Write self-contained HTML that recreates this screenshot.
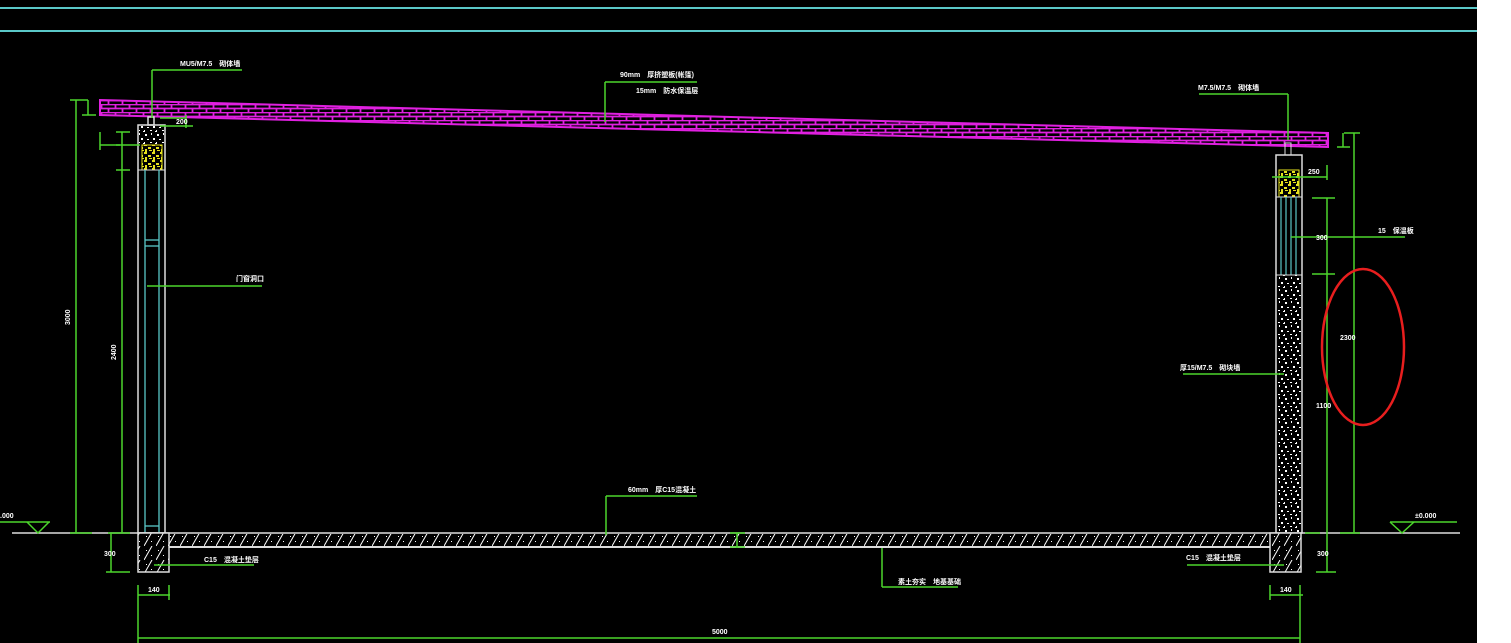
<!DOCTYPE html>
<html><head><meta charset="utf-8"><style>
html,body{margin:0;padding:0;background:#fff;}
svg{display:block;}
text{font-family:"Liberation Sans","Noto Sans CJK SC",sans-serif;fill:#fff;font-size:7px;font-weight:bold;}
</style></head><body>
<svg width="1511" height="643" viewBox="0 0 1511 643" xmlns="http://www.w3.org/2000/svg">
<defs>
<pattern id="hex" width="14" height="8" patternUnits="userSpaceOnUse">
<rect width="14" height="8" fill="#000"/>
<path d="M0 0.5H14M0 4.5H14M3.5 0.5V4.5M10.5 4.5V8" stroke="#e020e0" stroke-width="1.8" fill="none"/>
</pattern>
<pattern id="speck" width="12" height="12" patternUnits="userSpaceOnUse">
<rect width="12" height="12" fill="#000"/>
<rect x="1" y="2" width="2" height="2" fill="#fff"/><rect x="7" y="1" width="1" height="2" fill="#fff"/>
<rect x="9" y="6" width="2" height="2" fill="#fff"/><rect x="3" y="7" width="2" height="1" fill="#fff"/>
<rect x="6" y="10" width="2" height="1" fill="#fff"/><rect x="11" y="11" width="1" height="1" fill="#fff"/>
<rect x="0" y="10" width="1" height="2" fill="#fff"/>
</pattern>
<pattern id="ysp" width="8" height="8" patternUnits="userSpaceOnUse">
<rect width="8" height="8" fill="#000"/>
<rect x="0" y="0" width="3" height="2" fill="#e6e21e"/><rect x="4" y="3" width="3" height="2" fill="#e6e21e"/>
<rect x="1" y="5" width="2" height="3" fill="#e6e21e"/><rect x="5" y="6" width="3" height="1" fill="#e6e21e"/>
</pattern>
<pattern id="hatch" width="12" height="14" patternUnits="userSpaceOnUse">
<rect width="12" height="14" fill="#000"/>
<path d="M0 14L8 0" stroke="#fff" stroke-width="1"/>
<rect x="7" y="9" width="1" height="1" fill="#fff"/><rect x="2" y="4" width="1" height="1" fill="#fff"/>
</pattern>
</defs>
<rect width="1477" height="643" fill="#000"/>
<line x1="0" y1="8" x2="1477" y2="8" stroke="#5ac8c8" stroke-width="2"/>
<line x1="0" y1="31" x2="1477" y2="31" stroke="#5ac8c8" stroke-width="2"/>

<polygon points="100,100 1328,133 1328,147 100,115" fill="url(#hex)" stroke="#e020e0" stroke-width="2"/>

<g stroke="#ddd" stroke-width="1.5" fill="none">
<rect x="138" y="125" width="27" height="408" />
<rect x="148" y="117" width="6" height="8"/>
</g>
<rect x="139" y="126" width="25" height="18" fill="url(#speck)"/>
<rect x="142" y="145" width="20" height="25" fill="url(#ysp)" stroke="#e6e21e"/>
<line x1="138" y1="170" x2="165" y2="170" stroke="#ddd"/>
<g stroke="#5ac8c8" stroke-width="1.3">
<line x1="145" y1="170" x2="145" y2="533"/><line x1="159" y1="170" x2="159" y2="533"/>
<line x1="145" y1="240" x2="159" y2="240"/><line x1="145" y1="246" x2="159" y2="246"/>
<line x1="145" y1="526" x2="159" y2="526"/>
</g>

<rect x="1276" y="155" width="26" height="378" fill="none" stroke="#ddd" stroke-width="1.5"/>
<rect x="1285" y="143" width="6" height="12" fill="none" stroke="#ddd"/>
<rect x="1279" y="170" width="20" height="27" fill="url(#ysp)" stroke="#e6e21e"/>
<line x1="1276" y1="197" x2="1302" y2="197" stroke="#ddd"/>
<g stroke="#5ac8c8" stroke-width="1.2">
<line x1="1281" y1="197" x2="1281" y2="275"/><line x1="1286" y1="197" x2="1286" y2="275"/>
<line x1="1291" y1="197" x2="1291" y2="275"/><line x1="1296" y1="197" x2="1296" y2="275"/>
</g>
<rect x="1277" y="275" width="24" height="258" fill="url(#speck)"/>
<line x1="1276" y1="275" x2="1302" y2="275" stroke="#ddd"/>

<rect x="165" y="534" width="1105" height="13" fill="url(#hatch)"/>
<line x1="12" y1="533" x2="1460" y2="533" stroke="#ddd" stroke-width="1.5"/>
<line x1="169" y1="547" x2="1270" y2="547" stroke="#ddd" stroke-width="2"/>
<rect x="138" y="533" width="31" height="39" fill="url(#hatch)" stroke="#ddd" stroke-width="1.5"/>
<rect x="1270" y="533" width="31" height="39" fill="url(#hatch)" stroke="#ddd" stroke-width="1.5"/>

<g stroke="#4cd62c" stroke-width="1.5" fill="none">
<line x1="76" y1="100" x2="76" y2="533"/><line x1="70" y1="100" x2="88" y2="100"/><line x1="70" y1="533" x2="92" y2="533"/>
<line x1="88" y1="100" x2="88" y2="115"/><line x1="82" y1="115" x2="96" y2="115"/>
<line x1="122" y1="132" x2="122" y2="533"/><line x1="116" y1="132" x2="130" y2="132"/><line x1="116" y1="145" x2="140" y2="145"/><line x1="116" y1="170" x2="130" y2="170"/><line x1="108" y1="533" x2="130" y2="533"/>
<line x1="100" y1="145" x2="120" y2="145"/><line x1="100" y1="132" x2="100" y2="150"/>
<line x1="152" y1="70" x2="242" y2="70"/><line x1="152" y1="70" x2="152" y2="118"/>
<line x1="160" y1="118" x2="186" y2="118"/><line x1="186" y1="115" x2="186" y2="128"/><line x1="160" y1="126" x2="193" y2="126"/>
<line x1="147" y1="286" x2="262" y2="286"/>
<line x1="111" y1="533" x2="111" y2="572"/><line x1="106" y1="572" x2="130" y2="572"/>
<line x1="138" y1="585" x2="138" y2="643"/><line x1="169" y1="585" x2="169" y2="600"/><line x1="138" y1="595" x2="170" y2="595"/>
<line x1="138" y1="638" x2="1300" y2="638"/>
<line x1="1300" y1="585" x2="1300" y2="643"/><line x1="1270" y1="585" x2="1270" y2="600"/><line x1="1270" y1="595" x2="1303" y2="595"/>
<line x1="154" y1="565" x2="254" y2="565"/><line x1="1187" y1="565" x2="1284" y2="565"/>
<line x1="605" y1="82" x2="697" y2="82"/><line x1="605" y1="82" x2="605" y2="122"/>
<line x1="606" y1="496" x2="697" y2="496"/><line x1="606" y1="496" x2="606" y2="535"/>
<line x1="882" y1="548" x2="882" y2="587"/><line x1="882" y1="587" x2="958" y2="587"/>
<line x1="737" y1="533" x2="737" y2="548"/><line x1="730" y1="533" x2="745" y2="533"/><line x1="730" y1="547" x2="745" y2="547"/>
<line x1="1199" y1="94" x2="1288" y2="94"/><line x1="1288" y1="94" x2="1288" y2="140"/>
<line x1="1272" y1="177" x2="1327" y2="177"/><line x1="1327" y1="165" x2="1327" y2="180"/>
<line x1="1312" y1="198" x2="1335" y2="198"/><line x1="1327" y1="198" x2="1327" y2="572"/><line x1="1312" y1="274" x2="1335" y2="274"/><line x1="1316" y1="572" x2="1336" y2="572"/>
<line x1="1291" y1="237" x2="1405" y2="237"/>
<line x1="1183" y1="374" x2="1284" y2="374"/>
<line x1="1344" y1="133" x2="1360" y2="133"/><line x1="1354" y1="133" x2="1354" y2="533"/><line x1="1340" y1="533" x2="1360" y2="533"/>
<line x1="1343" y1="133" x2="1343" y2="147"/><line x1="1337" y1="147" x2="1350" y2="147"/>
<line x1="1305" y1="533" x2="1320" y2="533"/>
<line x1="0" y1="522" x2="50" y2="522"/><polyline points="27,522 38,533 49,522"/>
<line x1="1390" y1="522" x2="1457" y2="522"/><polyline points="1390,522 1402,533 1414,522"/>
</g>
<ellipse cx="1363" cy="347" rx="41" ry="78" fill="none" stroke="#e81e1e" stroke-width="2.5"/>

<text x="180" y="66">MU5/M7.5　砌体墙</text>
<text x="620" y="77">90mm　厚挤塑板(帐篷)</text>
<text x="636" y="93">15mm　防水保温层</text>
<text x="1198" y="90">M7.5/M7.5　砌体墙</text>
<text x="236" y="281">门窗洞口</text>
<text x="1378" y="233">15　保温板</text>
<text x="1180" y="370">厚15/M7.5　砌块墙</text>
<text x="628" y="492">60mm　厚C15混凝土</text>
<text x="204" y="562">C15　混凝土垫层</text>
<text x="1186" y="560">C15　混凝土垫层</text>
<text x="898" y="584">素土夯实　地基基础</text>
<text x="1415" y="518">±0.000</text>
<text x="0" y="518">.000</text>
<text x="148" y="592">140</text>
<text x="1280" y="592">140</text>
<text x="712" y="634">5000</text>
<text x="176" y="124">200</text>
<text x="1308" y="174">250</text>
<text x="1316" y="240">300</text>
<text x="1316" y="408">1100</text>
<text x="1340" y="340">2300</text>
<text x="70" y="325" transform="rotate(-90 70 325)">3000</text>
<text x="116" y="360" transform="rotate(-90 116 360)">2400</text>
<text x="104" y="556">300</text>
<text x="1317" y="556">300</text>
</svg>
</body></html>
